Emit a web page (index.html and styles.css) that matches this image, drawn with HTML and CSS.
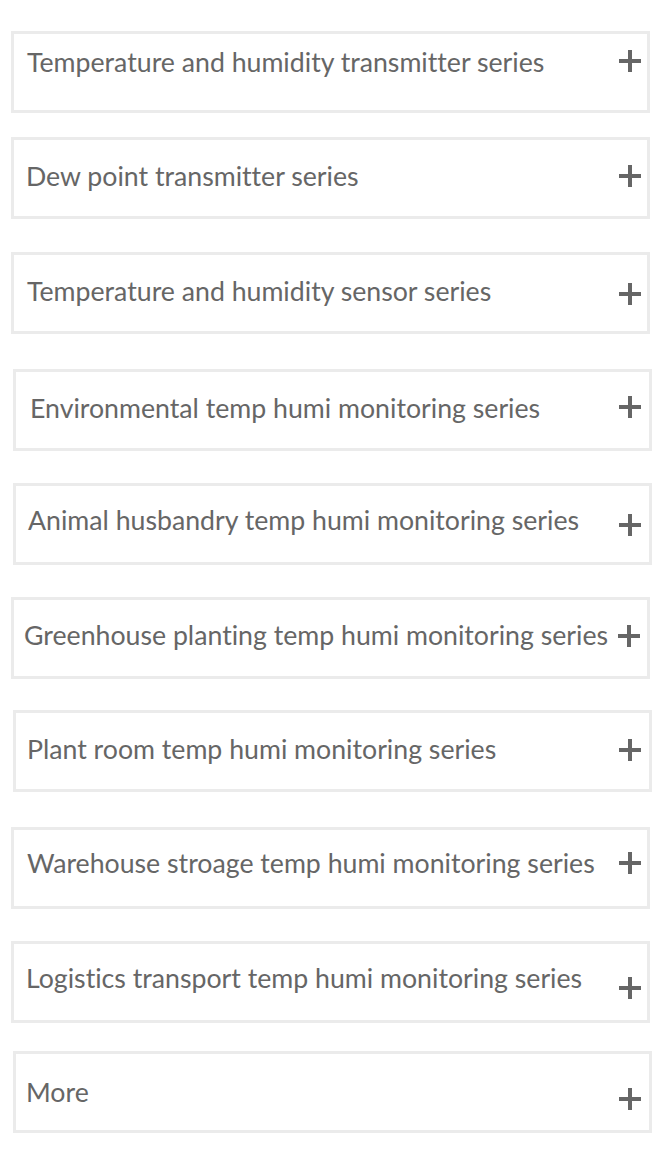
FILE: index.html
```html
<!DOCTYPE html>
<html>
<head>
<meta charset="utf-8">
<link rel="stylesheet" href="styles.css">
</head>
<body>
<ul class="list">
  <li class="item"><span class="label">Temperature and humidity transmitter series</span><svg class="plus" viewBox="0 0 22 22"><path d="M9 0h4v9h9v4h-9v9H9v-9H0V9h9z"/></svg></li>
  <li class="item"><span class="label">Dew point transmitter series</span><svg class="plus" viewBox="0 0 22 22"><path d="M9 0h4v9h9v4h-9v9H9v-9H0V9h9z"/></svg></li>
  <li class="item"><span class="label">Temperature and humidity sensor series</span><svg class="plus" viewBox="0 0 22 22"><path d="M9 0h4v9h9v4h-9v9H9v-9H0V9h9z"/></svg></li>
  <li class="item"><span class="label">Environmental temp humi monitoring series</span><svg class="plus" viewBox="0 0 22 22"><path d="M9 0h4v9h9v4h-9v9H9v-9H0V9h9z"/></svg></li>
  <li class="item"><span class="label">Animal husbandry temp humi monitoring series</span><svg class="plus" viewBox="0 0 22 22"><path d="M9 0h4v9h9v4h-9v9H9v-9H0V9h9z"/></svg></li>
  <li class="item"><span class="label">Greenhouse planting temp humi monitoring series</span><svg class="plus" viewBox="0 0 22 22"><path d="M9 0h4v9h9v4h-9v9H9v-9H0V9h9z"/></svg></li>
  <li class="item"><span class="label">Plant room temp humi monitoring series</span><svg class="plus" viewBox="0 0 22 22"><path d="M9 0h4v9h9v4h-9v9H9v-9H0V9h9z"/></svg></li>
  <li class="item"><span class="label">Warehouse stroage temp humi monitoring series</span><svg class="plus" viewBox="0 0 22 22"><path d="M9 0h4v9h9v4h-9v9H9v-9H0V9h9z"/></svg></li>
  <li class="item"><span class="label">Logistics transport temp humi monitoring series</span><svg class="plus" viewBox="0 0 22 22"><path d="M9 0h4v9h9v4h-9v9H9v-9H0V9h9z"/></svg></li>
  <li class="item"><span class="label">More</span><svg class="plus" viewBox="0 0 22 22"><path d="M9 0h4v9h9v4h-9v9H9v-9H0V9h9z"/></svg></li>
</ul>
</body>
</html>
```
FILE: styles.css
```css
html, body {
  margin: 0;
  padding: 0;
  background: #fff;
}
.list {
  list-style: none;
  margin: 0;
  padding: 0;
  display: flex;
  flex-direction: column;
  font-family: Lato, "Open Sans", sans-serif;
  font-size: 26.7px;
  font-variant-ligatures: none;
  color: #666;
}
.item {
  box-sizing: border-box;
  width: 639px;
  height: 82px;
  margin-left: 11px;
  border: 3px solid #ebebeb;
  display: flex;
  align-items: flex-start;
  padding-right: 6px;
}
.label {
  line-height: 30px;
  white-space: nowrap;
}
.plus {
  width: 22px;
  height: 22px;
  margin-left: auto;
  flex: none;
  fill: #666;
}

.item:nth-child(1) { margin-top: 31px; }
.item:nth-child(2) { margin-top: 24px; }
.item:nth-child(3) { margin-top: 33px; }
.item:nth-child(4) { margin-top: 35px; margin-left: 13px; padding-right: 8px; }
.item:nth-child(5) { margin-top: 32px; margin-left: 13px; padding-right: 8px; }
.item:nth-child(6) { margin-top: 32px; padding-right: 7px; }
.item:nth-child(7) { margin-top: 31px; margin-left: 13px; padding-right: 8px; }
.item:nth-child(8) { margin-top: 35px; }
.item:nth-child(9) { margin-top: 32px; }
.item:nth-child(10) { margin-top: 28px; margin-left: 13px; padding-right: 8px; }

.item:nth-child(1) .label { margin-top: 13px; padding-left: 13px; }
.item:nth-child(2) .label { margin-top: 21px; padding-left: 12px; }
.item:nth-child(3) .label { margin-top: 21px; padding-left: 13px; }
.item:nth-child(4) .label { margin-top: 21px; padding-left: 14px; }
.item:nth-child(5) .label { margin-top: 19px; padding-left: 12px; }
.item:nth-child(6) .label { margin-top: 20px; padding-left: 10px; }
.item:nth-child(7) .label { margin-top: 21px; padding-left: 11px; }
.item:nth-child(8) .label { margin-top: 18px; padding-left: 13px; }
.item:nth-child(9) .label { margin-top: 19px; padding-left: 12px; }
.item:nth-child(10) .label { margin-top: 23px; padding-left: 10px; }

.item:nth-child(1) .plus { margin-top: 16px; }
.item:nth-child(2) .plus { margin-top: 25px; }
.item:nth-child(3) .plus { margin-top: 28px; }
.item:nth-child(4) .plus { margin-top: 24px; }
.item:nth-child(5) .plus { margin-top: 28px; }
.item:nth-child(6) .plus { margin-top: 25px; }
.item:nth-child(7) .plus { margin-top: 26px; }
.item:nth-child(8) .plus { margin-top: 22px; }
.item:nth-child(9) .plus { margin-top: 33px; }
.item:nth-child(10) .plus { margin-top: 34px; }
```
